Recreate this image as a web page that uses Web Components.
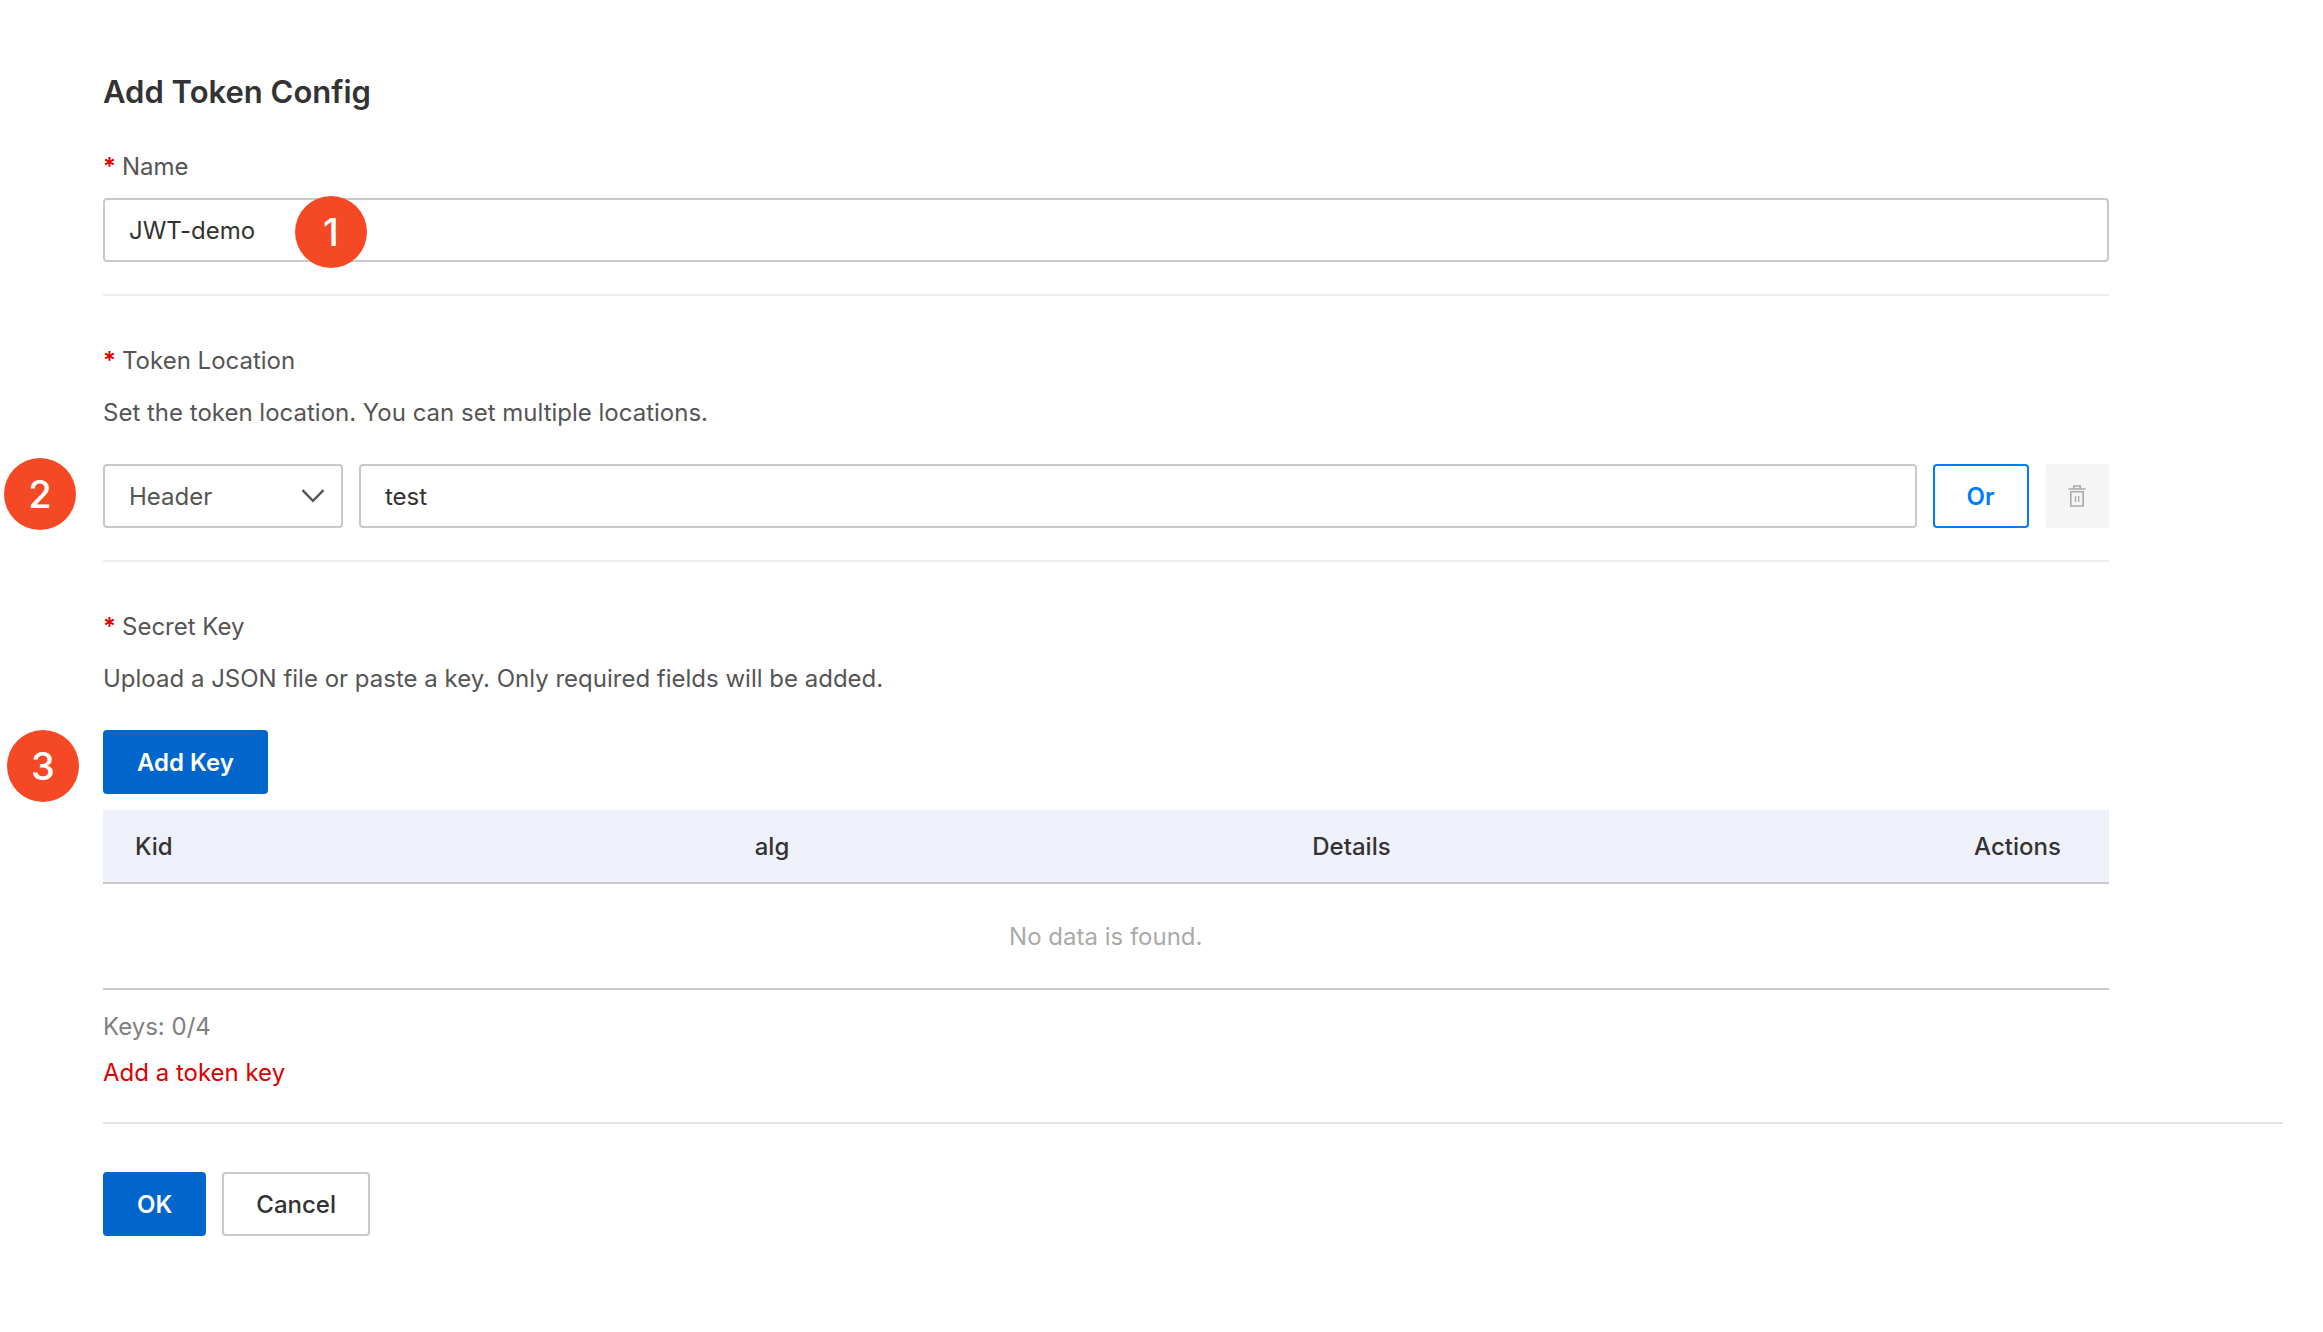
<!DOCTYPE html>
<html lang="en">
<head>
<meta charset="utf-8">
<title>Add Token Config</title>
<style>
    body {
        margin: 0;
        background-color: #fff;
        font-family: Inter, "Liberation Sans", sans-serif;
        font-size: 24px;
        line-height: 36px;
        color: #555;
        --tc-text: #333;
        --tc-border: #c9c9c9;
        --tc-primary: #0066cc;
        --tc-accent: #007cff;
        --tc-error: #e00000;
        --tc-step: #f54925;
    }
</style>
</head>
<body>
<token-config-page></token-config-page>

<script>
const createTemplate = (html) => {
    const template = document.createElement('template');
    template.innerHTML = html;
    return template;
};

// styles used by every element that draws a labelled form control
const fieldStyles = `
    :host {
        display: block;
    }
    label {
        display: block;
        width: max-content;
    }
    label::before {
        content: "*";
        display: inline-block;
        width: 19px;
        color: var(--tc-error);
        font-weight: 600;
    }
    p {
        margin: 16px 0 33px;
    }
    .row {
        position: relative;
        display: flex;
        gap: 16px;
    }
    input, select {
        box-sizing: border-box;
        height: 64px;
        margin: 0;
        padding: 0 24px;
        border: 2px solid var(--tc-border);
        border-radius: 4px;
        background-color: #fff;
        color: var(--tc-text);
        font: inherit;
    }
    input {
        flex: 1;
        min-width: 0;
    }
`;

class TCElement extends HTMLElement {
    constructor() {
        super();
        this.attachShadow({mode: 'open', delegatesFocus: true});
        this.shadowRoot.appendChild(this.constructor.template.content.cloneNode(true));
    }
}

class TCStep extends TCElement {
    static template = createTemplate(`
        <style>
            :host {
                position: absolute;
                display: flex;
                align-items: center;
                justify-content: center;
                width: 72px;
                height: 72px;
                border-radius: 50%;
                background-color: var(--tc-step);
                color: #fff;
                font-size: 38px;
                font-weight: 500;
            }
        </style>
        <slot></slot>
    `);
}

class TCButton extends TCElement {
    // lets a <label for> point at the element
    static formAssociated = true;

    static template = createTemplate(`
        <style>
            :host {
                display: block;
                flex: none;
            }
            button {
                display: flex;
                align-items: center;
                justify-content: center;
                box-sizing: border-box;
                height: 64px;
                margin: 0;
                padding: 2px 32px 0;
                border: 2px solid var(--tc-border);
                border-radius: 4px;
                background-color: #fff;
                color: var(--tc-text);
                font: inherit;
                font-weight: 500;
                cursor: pointer;
            }
            :host([variant="primary"]) button {
                border-color: var(--tc-primary);
                background-color: var(--tc-primary);
                color: #fff;
                font-weight: 600;
            }
            :host([variant="outline"]) button {
                border-color: var(--tc-accent);
                color: var(--tc-accent);
                font-weight: 600;
            }
            :host([variant="icon"]) button {
                width: 64px;
                padding: 0;
                border-color: #f5f5f5;
                background-color: #f5f5f5;
                color: #aaa;
                cursor: not-allowed;
            }
        </style>
        <button type="button"><slot></slot></button>
    `);

    connectedCallback() {
        const button = this.shadowRoot.querySelector('button');
        button.disabled = this.hasAttribute('disabled');
        if (this.hasAttribute('label')) {
            button.setAttribute('aria-label', this.getAttribute('label'));
        }
    }
}

class TCSection extends TCElement {
    static template = createTemplate(`
        <style>
            :host {
                display: block;
                width: 92%;
                margin-bottom: 47px;
                padding-bottom: 32px;
                border-bottom: 2px solid #eee;
                box-sizing: border-box;
            }
            :host([last]) {
                margin-bottom: 0;
                padding-bottom: 31px;
                border-bottom: 0;
            }
        </style>
        <slot></slot>
    `);
}

class TCNameField extends TCElement {
    static template = createTemplate(`
        <style>
            ${fieldStyles}
            label {
                margin-bottom: 13px;
            }
            tc-step {
                left: 192px;
                top: -2px;
            }
        </style>
        <label for="name">Name</label>
        <div class="row">
            <input id="name" type="text" value="JWT-demo" required>
            <tc-step>1</tc-step>
        </div>
    `);
}

class TCTokenLocation extends TCElement {
    static template = createTemplate(`
        <style>
            ${fieldStyles}
            .select {
                display: grid;
                flex: none;
                width: 240px;
                align-items: center;
            }
            .select > * {
                grid-area: 1 / 1;
            }
            select {
                width: 100%;
                padding-top: 2px;
                appearance: none;
                color: inherit;
            }
            .select svg {
                justify-self: end;
                margin-right: 18px;
                pointer-events: none;
            }
            tc-step {
                left: -99px;
                top: -6px;
            }
        </style>
        <label for="location">Token Location</label>
        <p>Set the token location. You can set multiple locations.</p>
        <div class="row">
            <tc-step>2</tc-step>
            <div class="select">
                <select id="location">
                    <option>Header</option>
                    <option>Query</option>
                </select>
                <svg width="24" height="14" viewBox="0 0 24 14" fill="none" stroke="#555" stroke-width="2.4">
                    <path d="M1.5 1.2 12 11.8 22.5 1.2"/>
                </svg>
            </div>
            <input type="text" value="test" aria-label="Token location name">
            <tc-button variant="outline">Or</tc-button>
            <tc-button variant="icon" label="Delete" disabled>
                <svg width="18" height="22" viewBox="0 0 18 22" fill="none" stroke="currentColor">
                    <path stroke-width="1.6" d="M.5 4H17.5M5.8 4V1H12.2V4M2.8 6.8H15.2V21H2.8Z"/>
                    <path stroke-width="1.3" d="M7.5 11V17M10.7 11V17"/>
                </svg>
            </tc-button>
        </div>
    `);
}

class TCKeyTable extends TCElement {
    static template = createTemplate(`
        <style>
            :host {
                display: block;
            }
            table {
                width: 100%;
                table-layout: fixed;
                border-collapse: separate;
                border-spacing: 0;
            }
            th, td {
                box-sizing: border-box;
                padding: 2px 32px 0;
                border-bottom: 2px solid var(--tc-border);
            }
            th {
                height: 74px;
                background-color: #eff1fa;
                color: var(--tc-text);
                font-weight: 500;
                text-align: left;
            }
            td {
                height: 106px;
                color: #aaa;
                text-align: center;
            }
            .kid {
                width: 30.9%;
            }
            .alg {
                width: 27.8%;
            }
            .details {
                width: 33%;
            }
            th:last-child {
                padding-right: 0;
            }
        </style>
        <table>
            <thead>
                <tr>
                    <th class="kid">Kid</th>
                    <th class="alg">alg</th>
                    <th class="details">Details</th>
                    <th>Actions</th>
                </tr>
            </thead>
            <tbody>
                <tr><td colspan="4">No data is found.</td></tr>
            </tbody>
        </table>
    `);
}

class TCSecretKey extends TCElement {
    static template = createTemplate(`
        <style>
            ${fieldStyles}
            tc-step {
                left: -96px;
                top: 0;
            }
            tc-key-table {
                margin: 16px 0 19px;
            }
            .count {
                color: #808080;
            }
            .error {
                margin-top: 10px;
                color: var(--tc-error);
            }
        </style>
        <label for="add-key">Secret Key</label>
        <p>Upload a JSON file or paste a key. Only required fields will be added.</p>
        <div class="row">
            <tc-step>3</tc-step>
            <tc-button id="add-key" variant="primary">Add Key</tc-button>
        </div>
        <tc-key-table></tc-key-table>
        <div class="count">Keys: 0/4</div>
        <div class="error" role="alert">Add a token key</div>
    `);
}

class TokenConfigPage extends TCElement {
    static template = createTemplate(`
        <style>
            :host {
                display: block;
                padding: 68px 40px 68px 103px;
            }
            h1 {
                margin: 0 0 33px;
                color: var(--tc-text);
                font-size: 31px;
                font-weight: 600;
                line-height: 48px;
            }
            footer {
                display: flex;
                gap: 16px;
                padding-top: 48px;
                border-top: 2px solid #e3e3e3;
            }
        </style>
        <h1>Add Token Config</h1>
        <tc-section><tc-name-field></tc-name-field></tc-section>
        <tc-section><tc-token-location></tc-token-location></tc-section>
        <tc-section last><tc-secret-key></tc-secret-key></tc-section>
        <footer>
            <tc-button variant="primary">OK</tc-button>
            <tc-button>Cancel</tc-button>
        </footer>
    `);
}

window.customElements.define('tc-step', TCStep);
window.customElements.define('tc-button', TCButton);
window.customElements.define('tc-section', TCSection);
window.customElements.define('tc-name-field', TCNameField);
window.customElements.define('tc-token-location', TCTokenLocation);
window.customElements.define('tc-key-table', TCKeyTable);
window.customElements.define('tc-secret-key', TCSecretKey);
window.customElements.define('token-config-page', TokenConfigPage);
</script>
</body>
</html>
